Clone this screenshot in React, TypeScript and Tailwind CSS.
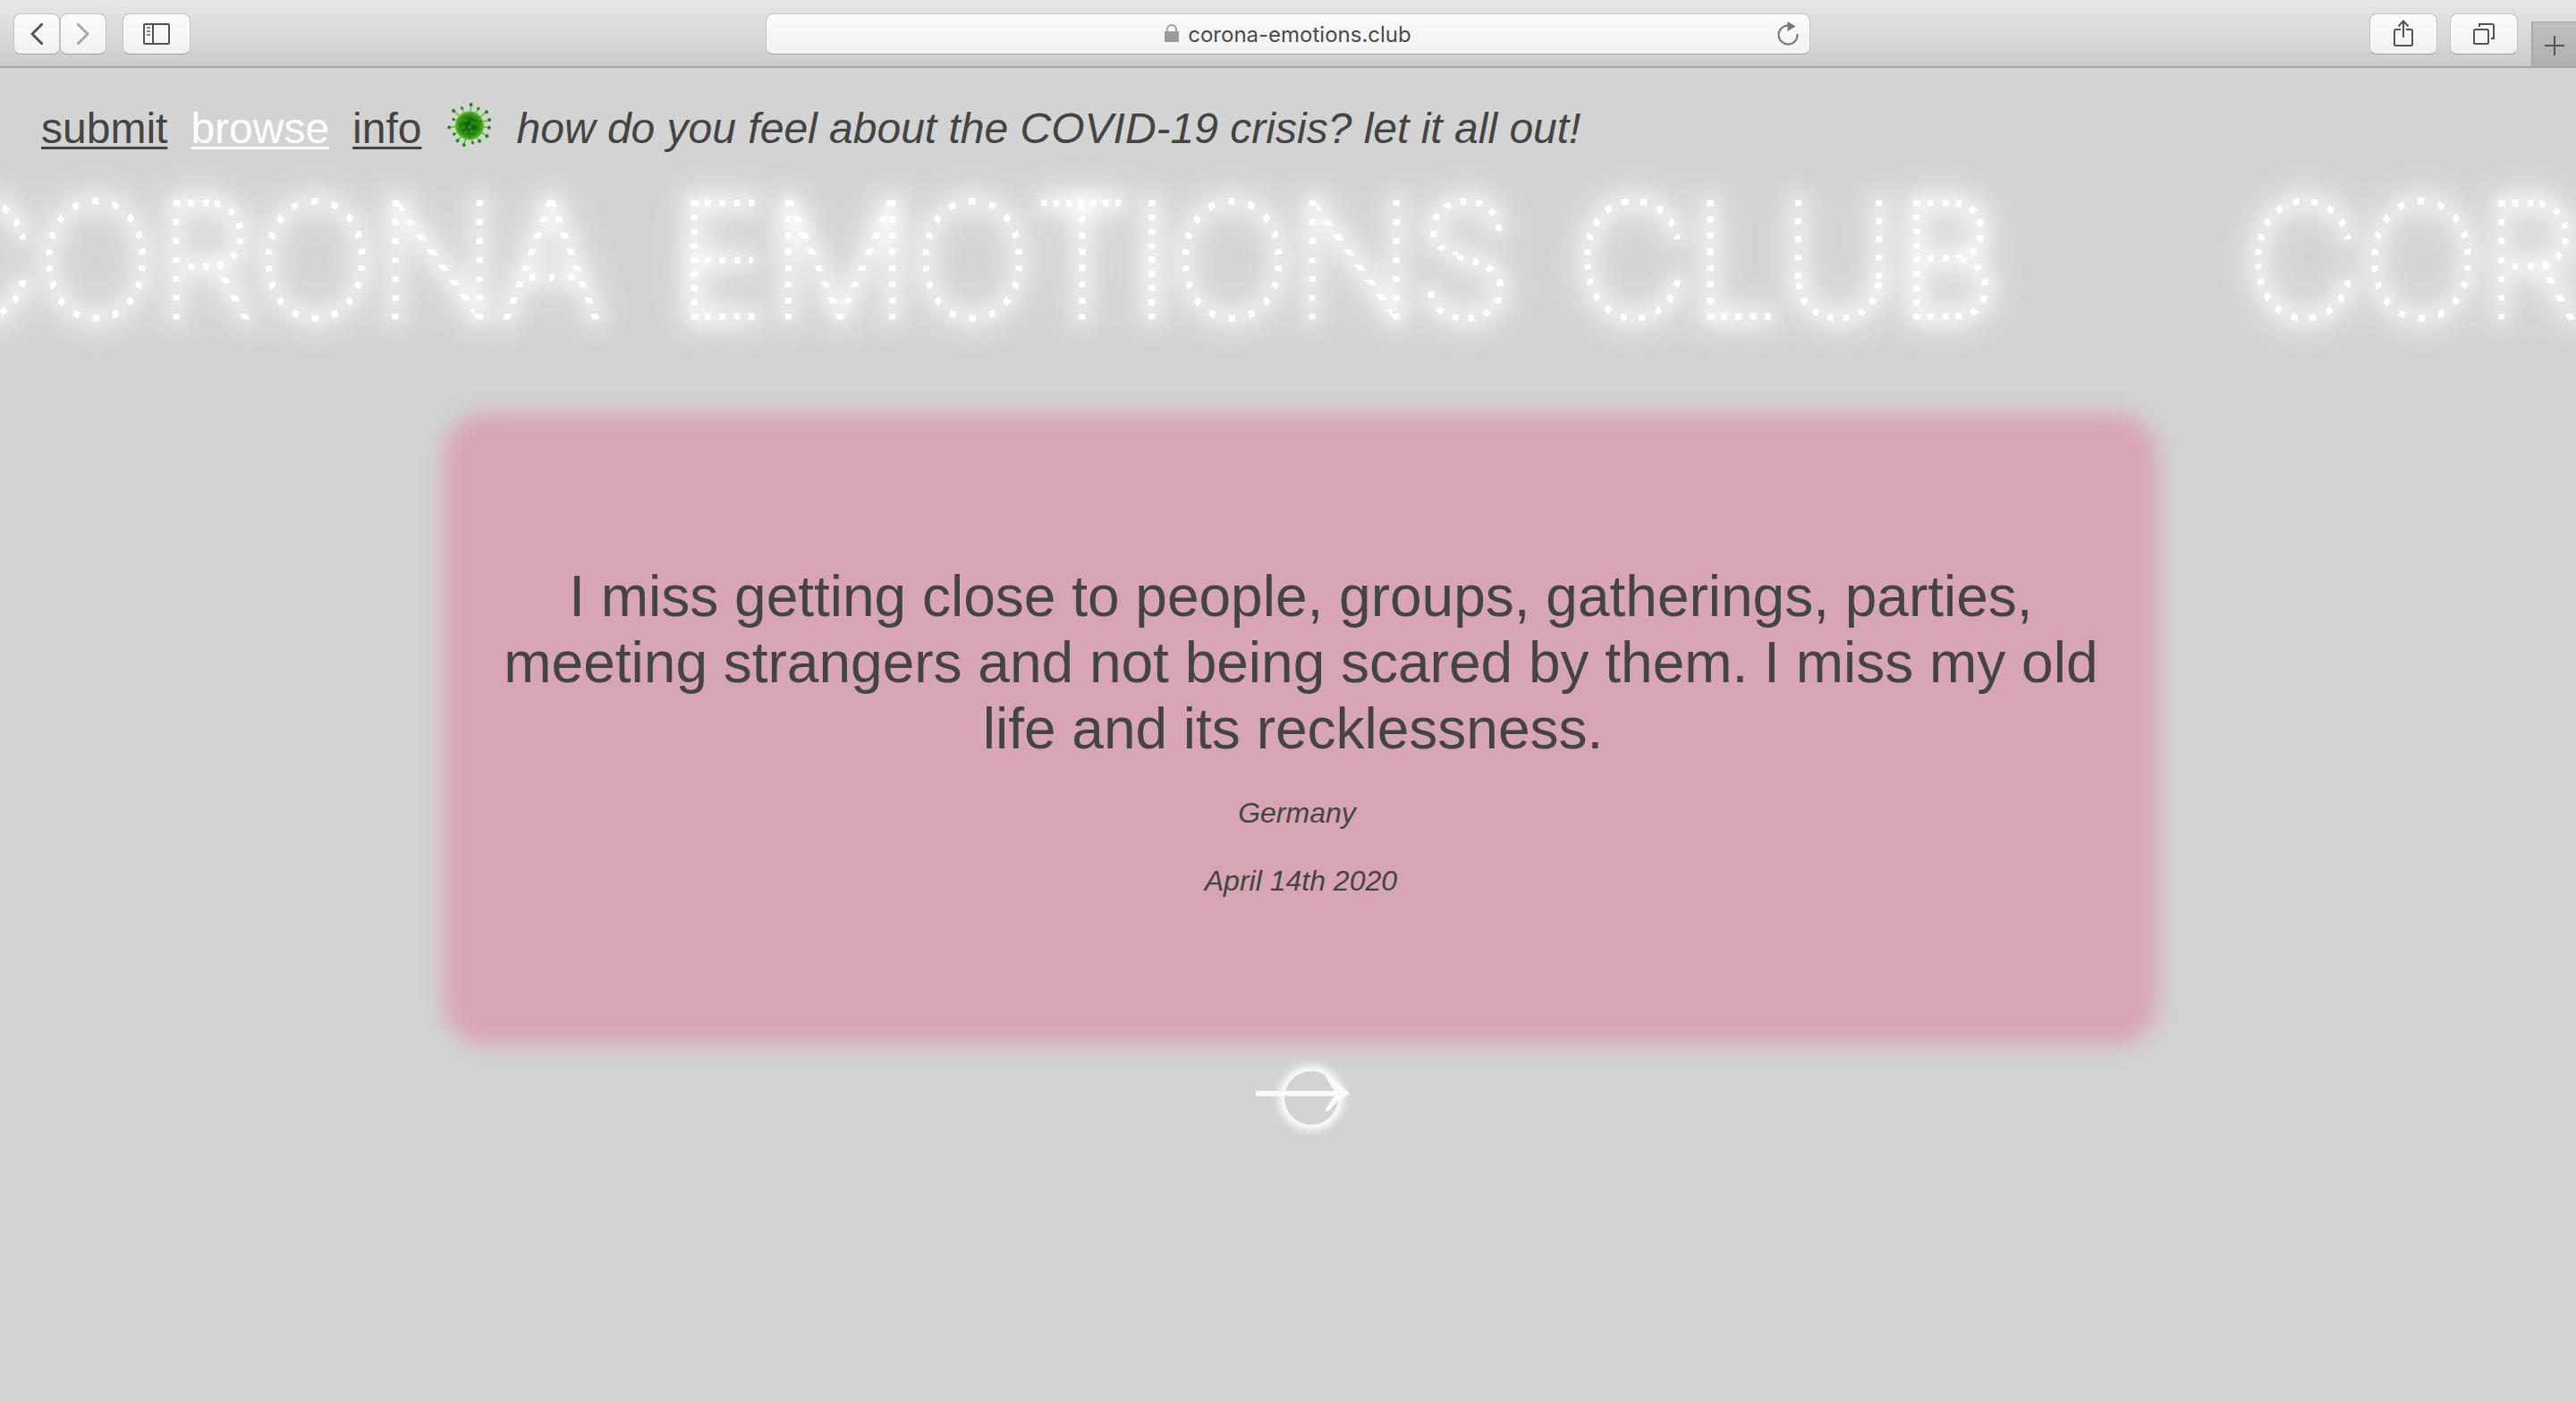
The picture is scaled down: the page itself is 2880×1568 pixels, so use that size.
import React from "react";

type Layer = { image: string; box: [number, number, number, number] };

const BULB = 7;

// A row of bulbs down a vertical stroke.
const down = (x: number, y: number, w: number, h: number, count: number): Layer => ({
  image: `repeating-linear-gradient(to bottom, #000 0 6px, transparent ${BULB}px ${(h - BULB) / (count - 1)}px)`,
  box: [x, y, w, h],
});

// A row of bulbs along a horizontal stroke.
const along = (x: number, y: number, w: number, h: number, count: number): Layer => ({
  image: `repeating-linear-gradient(to right, #000 0 6px, transparent ${BULB}px ${(w - BULB) / (count - 1)}px)`,
  box: [x, y, w, h],
});

// Bulbs round a curve with the given centre and radius.
const around = (
  [x, y, w, h]: [number, number, number, number],
  cx: number,
  cy: number,
  radius: number,
  first: number,
  step: number,
): Layer => {
  const arc = (BULB / radius) * 57.3;
  return {
    image: `repeating-conic-gradient(from ${first - arc / 2}deg at ${cx - x}px ${cy - y}px, #000 0 ${arc - 1}deg, transparent ${arc}deg ${step}deg)`,
    box: [x, y, w, h],
  };
};

const LETTERS: Record<string, Layer[]> = {
  A: [down(0, 23, 116, 134, 8), along(33, 104, 50, 11, 3)],
  B: [
    down(0, 23, 27, 134, 9),
    along(35, 0, 24, 180, 2),
    around([62, 0, 54, 88], 62, 57, 31, 15, 30),
    around([62, 88, 54, 92], 64, 121, 33, 20, 30),
  ],
  C: [around([0, 0, 131, 180], 67, 90, 58, 119, 17.88)],
  E: [down(0, 23, 27, 134, 9), along(34, 0, 56, 180, 4)],
  I: [down(0, 23, 45, 134, 9)],
  L: [down(0, 23, 27, 134, 8), along(34, 0, 56, 180, 4)],
  M: [down(0, 23, 161, 134, 8)],
  N: [down(0, 23, 27, 134, 7), down(27, 28, 84, 124, 8), down(111, 23, 28, 134, 7)],
  O: [around([0, 0, 135, 180], 67, 90, 58, 0, 20)],
  R: [
    down(0, 23, 27, 134, 7),
    along(35, 0, 24, 101, 2),
    around([61, 0, 50, 101], 61, 62, 35, 12, 30),
    down(60, 109, 51, 48, 3),
  ],
  S: [around([0, 0, 110, 84], 55, 57, 35, 25, 30), around([0, 84, 110, 96], 55, 122, 35, 20, 30)],
  T: [along(10, 0, 90, 34, 7), down(45, 41, 20, 116, 7)],
  U: [down(0, 23, 130, 88, 5), around([0, 112, 130, 68], 64, 110, 45, 101, 22.5)],
};

function maskStyle(letter: string): React.CSSProperties {
  const layers = LETTERS[letter];
  return {
    maskImage: layers.map((l) => l.image).join(","),
    maskPosition: layers.map((l) => `${l.box[0]}px ${l.box[1]}px`).join(","),
    maskSize: layers.map((l) => `${l.box[2]}px ${l.box[3]}px`).join(","),
    maskRepeat: "no-repeat",
  };
}

function Word({ text }: { text: string }) {
  return (
    <span className="shrink-0">
      {text.split("").map((letter, i) => (
        <span key={i} className="inline-block [-webkit-text-stroke:3px_#fff]" style={maskStyle(letter)}>
          {letter}
        </span>
      ))}
    </span>
  );
}

function Ticker() {
  return (
    <>
      <svg className="absolute size-0" aria-hidden="true">
        <filter id="bulb-glow" x="0" y="-0.5" width="1" height="2" colorInterpolationFilters="sRGB">
          <feGaussianBlur in="SourceGraphic" stdDeviation="11" result="near" />
          <feComponentTransfer in="near" result="nearGlow">
            <feFuncA type="linear" slope="4" />
          </feComponentTransfer>
          <feGaussianBlur in="SourceGraphic" stdDeviation="22" result="far" />
          <feComponentTransfer in="far" result="farGlow">
            <feFuncA type="linear" slope="4" />
          </feComponentTransfer>
          <feMerge>
            <feMergeNode in="farGlow" />
            <feMergeNode in="nearGlow" />
            <feMergeNode in="SourceGraphic" />
          </feMerge>
        </filter>
      </svg>
      <h1 className="mt-[29px] flex [filter:url(#bulb-glow)] font-['Inter'] text-[180px] leading-[180px] font-thin whitespace-nowrap text-white">
        <span className="-ml-[90px] flex">
          <Word text="CORONA" />
          <span className="w-[80px]"> </span>
          <Word text="EMOTIONS" />
          <span className="w-[66px]"> </span>
          <Word text="CLUB" />
          <span className="w-[274px]"> </span>
          <Word text="CORONA" />
        </span>
      </h1>
    </>
  );
}

const SPIKES: [number, number, number][] = [
  [4, 24, 2], [28, 22, 1.6], [52, 25, 2], [75, 24, 2], [97, 23, 2], [122, 24, 2], [148, 22, 2], [170, 21, 1.6],
  [196, 24, 2], [218, 23, 2], [240, 21, 1.6], [264, 24, 2], [290, 20, 1.6], [312, 25, 2], [336, 22, 1.6],
];

const SPOTS = [
  [23, 13], [30, 15], [36, 20], [16, 19], [20, 18], [27, 22], [31, 22], [35, 25],
  [17, 26], [24, 26], [13, 29], [20, 32], [26, 31], [31, 32], [24, 37],
];

function Virus() {
  return (
    <svg viewBox="0 0 48 48" className="mx-[3px] mb-[8px] size-12 overflow-visible" role="img" aria-label="virus">
      <defs>
        <radialGradient id="virus-body">
          <stop offset="0" stopColor="#0a5a10" />
          <stop offset="0.6" stopColor="#167a12" />
          <stop offset="1" stopColor="#5cc022" />
        </radialGradient>
      </defs>
      {SPIKES.map(([angle, reach, r]) => (
        <g key={angle} transform={`rotate(${angle} 24 24)`}>
          <line x1="24" y1="12" x2="24" y2={25 - reach} stroke="#62b82c" strokeWidth="1.4" />
          <circle cx="24" cy={25 - reach} r={r} fill="#23851b" />
        </g>
      ))}
      <circle cx="24" cy="24.5" r="16" fill="url(#virus-body)" />
      {SPOTS.map(([x, y]) => (
        <circle key={`${x}-${y}`} cx={x} cy={y} r="1.5" fill="#146b12" stroke="#58ad25" strokeWidth="0.8" />
      ))}
    </svg>
  );
}

const toolButton =
  "flex h-[46px] items-center justify-center rounded-[8px] border border-[#c3c3c3] border-b-[#a0a0a0] bg-linear-to-b from-[#fcfcfc] to-[#f1f1f1] text-[#555]";

function Toolbar() {
  return (
    <header className="flex h-[76px] items-start justify-between border-b-2 border-[#a6a6a6] bg-linear-to-b from-[#e8e8e8] to-[#cbcbcb]">
      <div className="flex w-[840px] pt-[15px] pl-[15px]">
        <button aria-label="Back" className={`${toolButton} w-[52px]`}>
          <svg viewBox="0 0 14 24" className="h-6 w-[14px]" fill="none" stroke="currentColor" strokeWidth="3">
            <path d="M13 1 2 12l11 11" strokeLinecap="round" />
          </svg>
        </button>
        <button aria-label="Forward" className={`${toolButton} w-[52px]`}>
          <svg viewBox="0 0 14 24" className="h-6 w-[14px]" fill="none" stroke="#aaa" strokeWidth="3">
            <path d="m1 1 11 11L1 23" strokeLinecap="round" />
          </svg>
        </button>
        <button aria-label="Sidebar" className={`${toolButton} ml-[18px] w-[76px]`}>
          <svg viewBox="0 0 30 24" className="h-6 w-[30px]" fill="none" stroke="currentColor" strokeWidth="2">
            <rect x="1" y="1" width="28" height="22" rx="1" />
            <path d="M11 1v22" />
            <path d="M4 5h4M4 9h4M4 13h4" stroke="#888" />
          </svg>
        </button>
      </div>
      <div className="flex flex-1 justify-center pt-[15px]">
        <div className="flex h-[46px] w-[1168px] items-center rounded-[8px] border border-[#c3c3c3] border-b-[#a0a0a0] bg-linear-to-b from-[#fcfcfc] to-[#f1f1f1] px-[10px] text-[#4a4a4a]">
          <span className="w-[28px]" />
          <div className="flex flex-1 items-center justify-center gap-[10px]">
            <svg viewBox="0 0 16 20" className="mb-[2px] h-5 w-4">
              <path d="M3 9V6a5 5 0 0 1 10 0v3" fill="none" stroke="#9b9b9b" strokeWidth="1.8" />
              <rect y="8" width="16" height="12" fill="#9b9b9b" />
            </svg>
            <span className="pt-[2px] font-['Inter'] text-[24px] leading-8">corona-emotions.club</span>
          </div>
          <button aria-label="Reload" className="w-[28px]">
            <svg viewBox="0 0 28 28" className="size-7" fill="none" stroke="#777" strokeWidth="2">
              <path d="M24.5 14A10.5 10.5 0 1 1 14 4.5" />
              <path d="M13.500 0v11l9-5.500z" fill="#777" stroke="none" />
            </svg>
          </button>
        </div>
      </div>
      <div className="flex w-[840px] justify-end">
        <button aria-label="Share" className={`${toolButton} mt-[15px] w-[76px]`}>
          <svg viewBox="0 0 22 30" className="mb-[2px] h-[30px] w-[22px]" fill="none" stroke="currentColor" strokeWidth="2">
            <path d="M8 11H2.5Q1 11 1 12.5V27.5Q1 29 2.5 29H19.5Q21 29 21 27.5V12.5Q21 11 19.5 11H14" />
            <path d="M11 20V2M5.5 7.5 11 1.5l5.5 6" />
          </svg>
        </button>
        <button aria-label="Show tabs" className={`${toolButton} mt-[15px] ml-[14px] w-[76px]`}>
          <svg viewBox="0 0 24 24" className="size-6" fill="none" stroke="currentColor" strokeWidth="2">
            <rect x="1" y="7" width="16" height="16" rx="1.5" />
            <path d="M7 4V1h14.5Q23 1 23 2.5V17h-3" />
          </svg>
        </button>
        <button aria-label="New tab" className="mt-[24px] ml-[15px] flex h-[50px] w-[50px] items-center justify-center border-t border-l-2 border-t-[#a8a8a8] border-l-[#a8a8a8] bg-linear-to-b from-[#bfbfbf] to-[#b0b0b0] pt-[2px] text-[#555]">
          <svg viewBox="0 0 22 22" className="size-[22px]" stroke="currentColor" strokeWidth="2">
            <path d="M11 0v22M0 11h22" />
          </svg>
        </button>
      </div>
    </header>
  );
}

export default function App() {
  return (
    <div className="min-h-screen overflow-hidden bg-[#d3d3d3] font-['Liberation_Sans',Arial,sans-serif] text-[#444]">
      <Toolbar />
      <nav className="flex h-[96px] items-end gap-[26px] px-[46px] text-[48px] leading-[56px]">
        <a href="#submit" className="underline decoration-[3px] underline-offset-[4px]">submit</a>
        <a href="#browse" className="text-white underline decoration-[3px] underline-offset-[4px]">browse</a>
        <a href="#info" className="underline decoration-[3px] underline-offset-[4px]">info</a>
        <Virus />
        <em>how do you feel about the COVID-19 crisis? let it all out!</em>
      </nav>
      <Ticker />
      <main className="flex flex-col items-center pt-[103px] pr-[17%] pl-[18%]">
        <article className="w-full rounded-[26px] bg-[#d8a5b5] px-[36px] pt-[146px] pb-[143px] text-center shadow-[0_0_24px_22px_#d8a5b5]">
          <p className="text-[64px] leading-[74px]">
            I miss getting close to people, groups, gatherings, parties, meeting strangers and not being scared by
            them. I miss my old life and its recklessness.&nbsp;
          </p>
          <p className="mt-[38px] text-[32px] leading-[38px] italic">Germany&nbsp;</p>
          <p className="mt-[38px] text-[32px] leading-[38px] italic">April 14th 2020</p>
        </article>
        <button aria-label="Next emotion" className="relative mt-[51px] ml-[24px] size-[60px] rounded-full shadow-[0_0_10px_6px_#fff]">
          <svg viewBox="0 0 104 48" className="absolute top-0 left-[-32px] h-12 w-[104px] max-w-none" fill="#fafafa">
            <path d="M0 22h88C84 16 80 11 77 4l4-1c7 9 15 15 23 20v3C95 30 88 37 81 45h-4c3-7 7-12 11-17H0z" />
          </svg>
        </button>
      </main>
    </div>
  );
}
